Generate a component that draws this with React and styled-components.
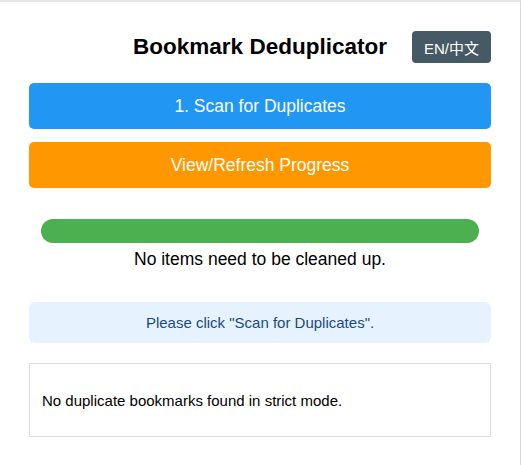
import React from 'react';
import styled, { createGlobalStyle } from 'styled-components';

const GlobalStyle = createGlobalStyle`
  html, body {
    margin: 0;
    padding: 0;
    background: #ffffff;
  }
  body {
    font-family: "Liberation Sans", Arial, "Noto Sans CJK SC", sans-serif;
    color: #000;
  }
`;

const Frame = styled.div`
  box-sizing: border-box;
  width: 521px;
  min-height: 465px;
  border-top: 2px solid #e6e6e6;
  border-right: 1px solid #d8d8d8;
  padding: 0 29px 0 29px;
`;

const Header = styled.div`
  position: relative;
  display: flex;
  justify-content: center;
  align-items: center;
  height: 32px;
  margin-top: 29px;
`;

const Title = styled.h1`
  margin: 0;
  font-size: 22.5px;
  font-weight: bold;
`;

const LangButton = styled.button`
  position: absolute;
  right: 0;
  top: 0;
  height: 32px;
  padding: 0 12px;
  border: none;
  border-radius: 4px;
  background: #455a64;
  color: #fff;
  font-family: inherit;
  font-size: 15px;
`;

const ActionButton = styled.button`
  display: block;
  width: 100%;
  height: 46px;
  margin-top: ${p => p.$top}px;
  border: none;
  border-radius: 5px;
  background: ${p => p.$color};
  color: #fff;
  font-family: inherit;
  font-size: 17.5px;
`;

const ProgressWrap = styled.div`
  margin-top: 31px;
  padding: 0 12px;
  text-align: center;
`;

const ProgressBar = styled.div`
  height: 24px;
  border-radius: 12px;
  background: #4caf50;
`;

const ProgressText = styled.div`
  margin-top: 5px;
  font-size: 17.5px;
  line-height: 22px;
`;

const InfoBox = styled.div`
  margin-top: 32px;
  height: 41px;
  display: flex;
  align-items: center;
  justify-content: center;
  border-radius: 6px;
  background: #e6f2fd;
  color: #1a4a7c;
  font-size: 15px;
`;

const ResultBox = styled.div`
  box-sizing: border-box;
  margin-top: 20px;
  height: 74px;
  display: flex;
  align-items: center;
  padding: 0 12px;
  border: 1px solid #ddd;
  font-size: 15px;
`;

export default function App() {
  return (
    <>
      <GlobalStyle />
      <Frame>
        <Header>
          <Title>Bookmark Deduplicator</Title>
          <LangButton>EN/中文</LangButton>
        </Header>
        <ActionButton $top={20} $color="#2196f3">1. Scan for Duplicates</ActionButton>
        <ActionButton $top={13} $color="#ff9800">View/Refresh Progress</ActionButton>
        <ProgressWrap>
          <ProgressBar />
          <ProgressText>No items need to be cleaned up.</ProgressText>
        </ProgressWrap>
        <InfoBox>Please click "Scan for Duplicates".</InfoBox>
        <ResultBox>No duplicate bookmarks found in strict mode.</ResultBox>
      </Frame>
    </>
  );
}
